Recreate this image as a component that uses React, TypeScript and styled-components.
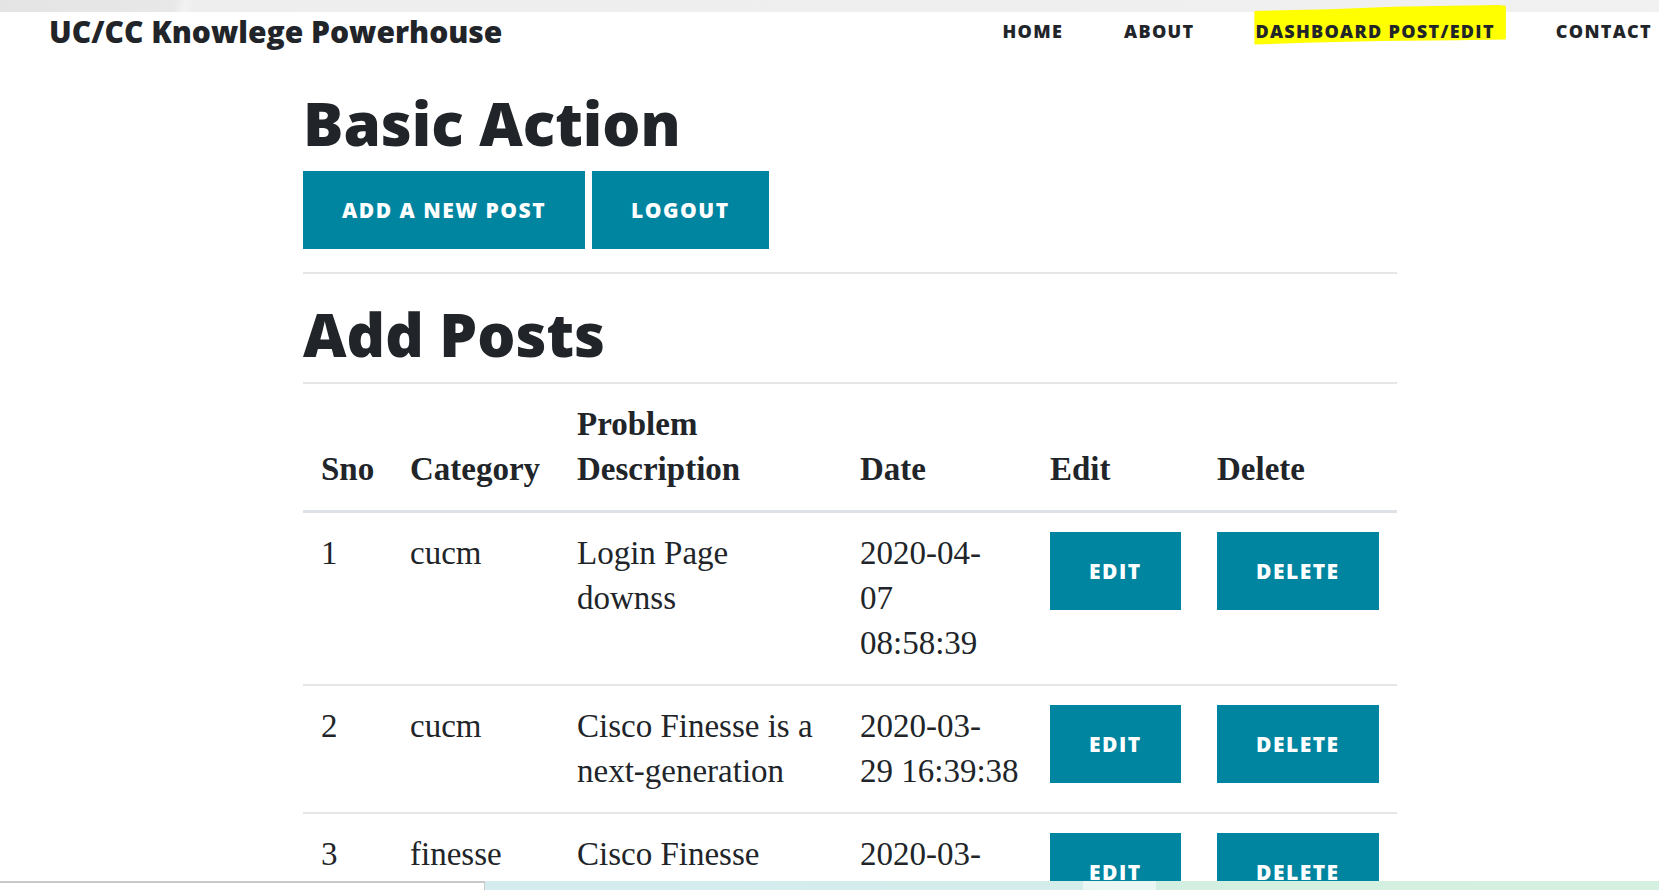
import React from "react";
import styled, { createGlobalStyle } from "styled-components";

const colors = {
  text: "#212529",
  primary: "#0085a1",
  rule: "#e6e6e6",
  tableRule: "#dee2e6",
};

const fonts = {
  sans: "'Open Sans', 'Noto Sans', sans-serif",
  serif: "'Liberation Serif', 'DejaVu Serif', serif",
};

const GlobalStyle = createGlobalStyle`
  html, body {
    margin: 0;
    padding: 0;
    overflow: hidden;
    background: #fff;
  }
  body {
    font-family: ${fonts.serif};
    color: ${colors.text};
  }
`;

const Page = styled.div`
  display: flex;
  flex-flow: column nowrap;
  width: 100%;
`;

const TopStrip = styled.div`
  height: 12px;
  background: linear-gradient(
    100deg,
    #e4e4e4 0%,
    #e8e8e8 10.5%,
    #f2f2f2 11.2%,
    #eeeeee 11.8%,
    #efefef 60%,
    #f1f1f1 100%
  );
`;

const NavBar = styled.nav`
  display: flex;
  align-items: center;
  height: 38px;
  padding: 0 0 0 49px;
`;

const Brand = styled.a`
  font-family: ${fonts.sans};
  font-weight: 800;
  font-size: 30px;
  color: ${colors.text};
  text-decoration: none;
  white-space: nowrap;
`;

const NavLinks = styled.ul`
  display: flex;
  align-items: center;
  gap: 61px;
  list-style: none;
  margin: 0 7px 0 auto;
  padding: 0;
`;

const NavItem = styled.li`
  position: relative;
`;

const NavLink = styled.a`
  position: relative;
  z-index: 1;
  font-family: ${fonts.sans};
  font-weight: 800;
  font-size: 18px;
  letter-spacing: 1.3px;
  text-transform: uppercase;
  color: ${colors.text};
  text-decoration: none;
  white-space: nowrap;
`;

const Marker = styled.span`
  position: absolute;
  left: -1px;
  right: -11px;
  top: -14px;
  bottom: -4px;
  background: #ffff00;
  clip-path: polygon(
    0% 14%,
    30% 10%,
    55% 4%,
    97% 0%,
    100% 2%,
    100% 82%,
    80% 84%,
    50% 86%,
    20% 90%,
    0% 94%
  );
`;

const Content = styled.main`
  display: flex;
  flex-flow: column nowrap;
  width: 1094px;
  padding-left: 303px;
`;

const Heading = styled.h1`
  font-family: ${fonts.sans};
  font-weight: 800;
  font-size: 60px;
  line-height: 74px;
  margin: 36px 0 11px;
  color: ${colors.text};
`;

const SubHeading = styled(Heading).attrs({ as: "h2" })`
  margin: 23px 0 11px;
`;

const ButtonRow = styled.div`
  display: flex;
  gap: 7px;
`;

const ActionButton = styled.button`
  font-family: ${fonts.sans};
  font-weight: 800;
  font-size: 21px;
  line-height: 32px;
  letter-spacing: 1.5px;
  text-transform: uppercase;
  color: #fff;
  background-color: ${colors.primary};
  border: 1px solid ${colors.primary};
  border-radius: 0;
  padding: 22px 38px;
  cursor: pointer;
  white-space: nowrap;
`;

const Rule = styled.hr`
  border: none;
  border-top: 2px solid ${colors.rule};
  margin: 23px 0 0;
  width: 100%;
`;

const Table = styled.table`
  width: 1094px;
  table-layout: fixed;
  border-collapse: collapse;
  font-family: ${fonts.serif};
  font-size: 33px;
  line-height: 45px;
  color: ${colors.text};
`;

const HeadCell = styled.th`
  text-align: left;
  font-weight: 700;
  vertical-align: bottom;
  padding: 18px;
  border-top: 2px solid ${colors.rule};
  border-bottom: 3px solid ${colors.tableRule};
`;

const Cell = styled.td`
  vertical-align: top;
  padding: 18px;
  border-bottom: 2px solid ${colors.rule};
`;

const DateLine = styled.span`
  display: block;
  white-space: nowrap;
`;

const RowButton = styled(ActionButton)`
  display: block;
  margin-top: 1px;
`;

const BottomBar = styled.div`
  position: fixed;
  left: 0;
  right: 0;
  bottom: 0;
  height: 9px;
  display: flex;
`;

const BottomLeft = styled.div`
  width: 484px;
  border-top: 2px solid #c9c9c9;
  background: #fff;
`;

const BottomRight = styled.div`
  flex: 1;
  border-left: 1px solid #c9c9c9;
  background: linear-gradient(
    90deg,
    #d5ecef 0px,
    #d3edea 598px,
    #eaf6f3 598px,
    #ebf7f4 671px,
    #d3efe1 671px,
    #d4f0e0 100%
  );
`;

type Post = {
  sno: number;
  category: string;
  description: string;
  date: string[];
};

const posts: Post[] = [
  {
    sno: 1,
    category: "cucm",
    description: "Login Page downss",
    date: ["2020-04-", "07", "08:58:39"],
  },
  {
    sno: 2,
    category: "cucm",
    description: "Cisco Finesse is a next-generation",
    date: ["2020-03-", "29 16:39:38"],
  },
  {
    sno: 3,
    category: "finesse",
    description: "Cisco Finesse troubleshooting",
    date: ["2020-03-", "28", "11:20:45"],
  },
];

const navItems = ["Home", "About", "Dashboard Post/Edit", "Contact"];

const App = () => {
  return (
    <Page>
      <GlobalStyle />
      <TopStrip />
      <NavBar>
        <Brand href="#">UC/CC Knowlege Powerhouse</Brand>
        <NavLinks>
          {navItems.map((item) => (
            <NavItem key={item}>
              {item === "Dashboard Post/Edit" && <Marker />}
              <NavLink href="#">{item}</NavLink>
            </NavItem>
          ))}
        </NavLinks>
      </NavBar>
      <Content>
        <Heading>Basic Action</Heading>
        <ButtonRow>
          <ActionButton>Add a new post</ActionButton>
          <ActionButton>Logout</ActionButton>
        </ButtonRow>
        <Rule />
        <SubHeading>Add Posts</SubHeading>
        <Table>
          <colgroup>
            <col style={{ width: 89 }} />
            <col style={{ width: 167 }} />
            <col style={{ width: 283 }} />
            <col style={{ width: 190 }} />
            <col style={{ width: 167 }} />
            <col style={{ width: 198 }} />
          </colgroup>
          <thead>
            <tr>
              <HeadCell>Sno</HeadCell>
              <HeadCell>Category</HeadCell>
              <HeadCell>Problem Description</HeadCell>
              <HeadCell>Date</HeadCell>
              <HeadCell>Edit</HeadCell>
              <HeadCell>Delete</HeadCell>
            </tr>
          </thead>
          <tbody>
            {posts.map((post) => (
              <tr key={post.sno}>
                <Cell>{post.sno}</Cell>
                <Cell>{post.category}</Cell>
                <Cell>{post.description}</Cell>
                <Cell>
                  {post.date.map((line, i) => (
                    <DateLine key={i}>{line}</DateLine>
                  ))}
                </Cell>
                <Cell>
                  <RowButton>Edit</RowButton>
                </Cell>
                <Cell>
                  <RowButton>Delete</RowButton>
                </Cell>
              </tr>
            ))}
          </tbody>
        </Table>
      </Content>
      <BottomBar>
        <BottomLeft />
        <BottomRight />
      </BottomBar>
    </Page>
  );
};

export default App;
